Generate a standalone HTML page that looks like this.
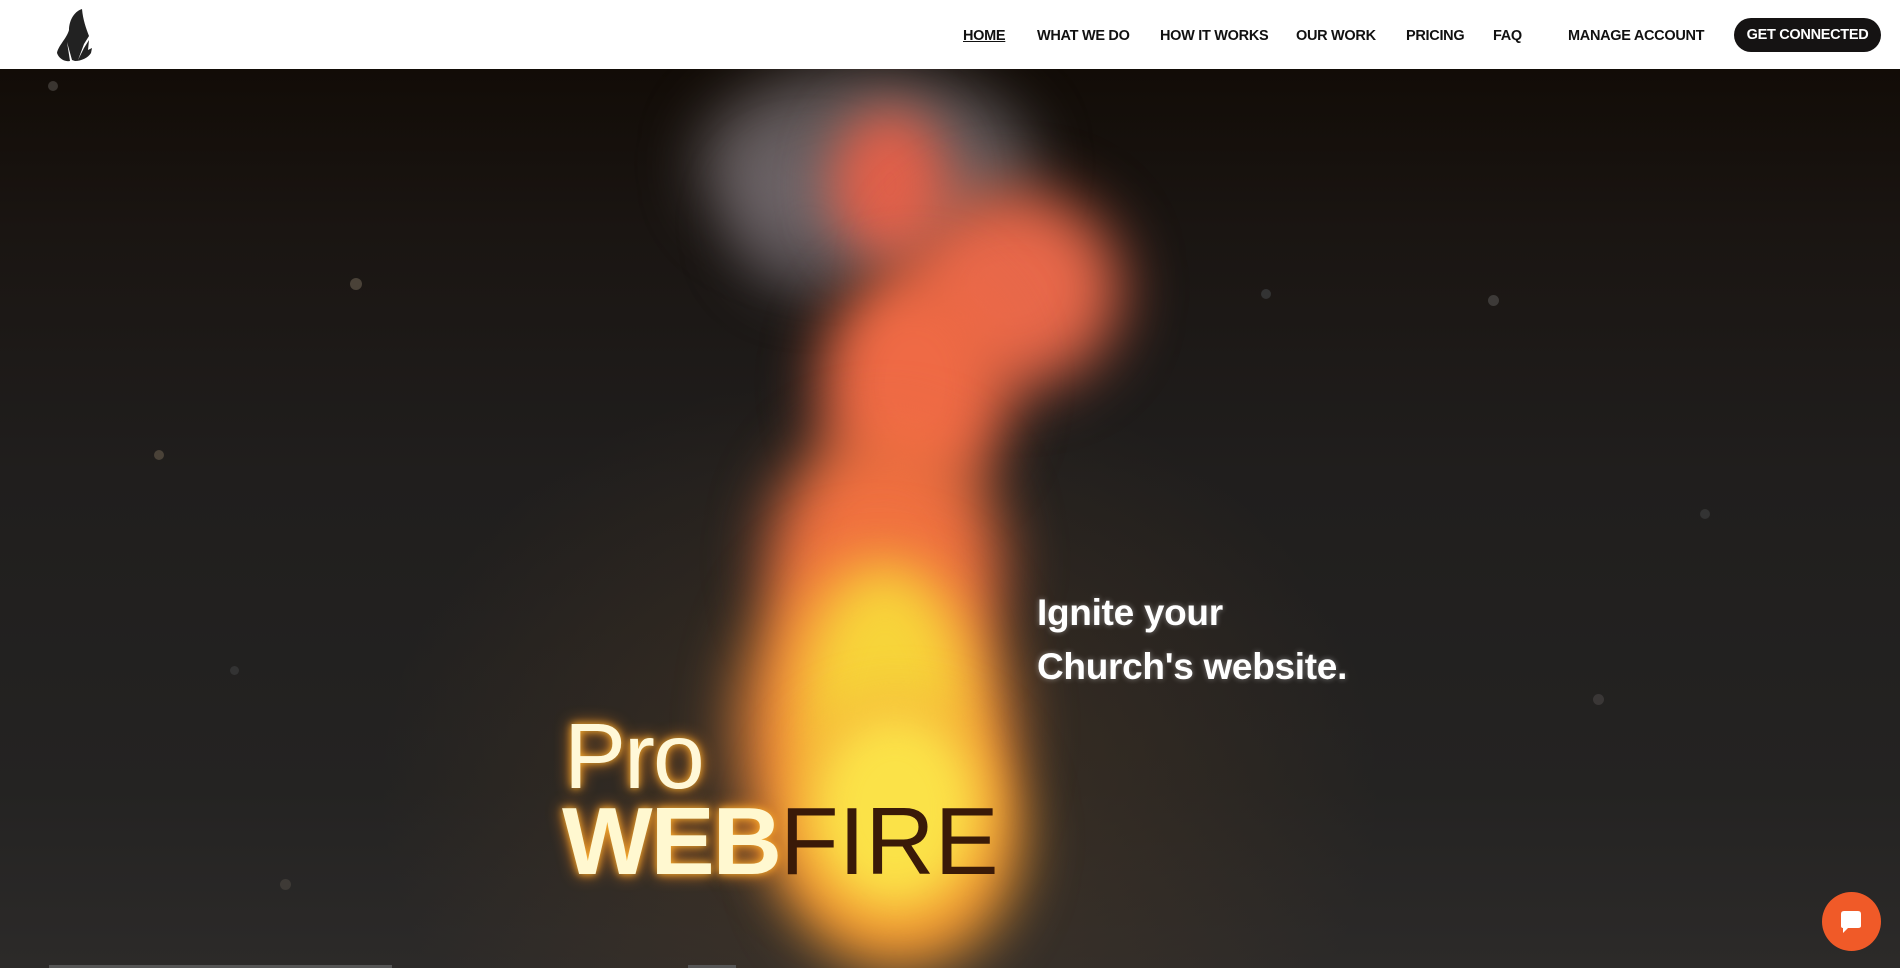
<!DOCTYPE html>
<html><head><meta charset="utf-8"><style>
*{margin:0;padding:0;box-sizing:border-box}
body{width:1900px;height:968px;overflow:hidden;background:#1e1d1d;font-family:"Liberation Sans",sans-serif}
header{position:absolute;left:0;top:0;width:1900px;height:69px;background:#fff;z-index:5}
nav a{position:absolute;top:28px;font-size:14.5px;font-weight:bold;color:#111;text-decoration:none;letter-spacing:-0.3px}
.btn{position:absolute;left:1734px;top:18px;width:147px;height:34px;border-radius:17px;background:#151313;color:#fff;font-size:14.5px;font-weight:bold;text-align:center;line-height:35px;letter-spacing:-0.3px}
.hero{position:absolute;left:0;top:69px;width:1900px;height:899px;background:linear-gradient(180deg,#120c07 0%,#1a1512 18%,#201e1d 45%,#242322 80%,#2c2a29 100%);overflow:hidden}
.b{position:absolute;border-radius:50%}
.t{position:absolute;white-space:nowrap}
</style></head><body>
<header>
<svg style="position:absolute;left:55px;top:8px" width="46" height="55" viewBox="0 0 46 55">
<path d="M27 1 C18 4 14 14 14 22 C12 30 3 38 2 45 C4 51 10 54 15 53 L12 34 L17 52 L20 53 C26 53 33 50 36 45 L37 40 L33 42 L34 32 L29 40 L23 52 L29 36 L34 28 C31 20 28 12 27 1 Z" fill="#222"/>
</svg>
<nav>
<a style="left:963px;text-decoration:underline">HOME</a>
<a style="left:1037px">WHAT WE DO</a>
<a style="left:1160px">HOW IT WORKS</a>
<a style="left:1296px">OUR WORK</a>
<a style="left:1406px">PRICING</a>
<a style="left:1493px">FAQ</a>
<a style="left:1568px">MANAGE ACCOUNT</a>
</nav>
<div class="btn">GET CONNECTED</div>
</header>
<div class="hero">
<div style="position:absolute;left:0;top:0;width:1900px;height:899px;background:radial-gradient(ellipse 500px 420px at 880px 720px,rgba(120,80,40,.3),transparent)"></div>
<div class="b" style="left:700px;top:0;width:330px;height:190px;background:rgba(150,140,145,.6);filter:blur(30px)"></div>
<div class="b" style="left:730px;top:80px;width:160px;height:150px;background:rgba(120,110,115,.5);filter:blur(25px)"></div>
<div class="b" style="left:830px;top:40px;width:120px;height:150px;background:#e0604a;filter:blur(25px)"></div>
<div class="b" style="left:900px;top:120px;width:220px;height:200px;background:#e8684a;filter:blur(30px)"></div>
<div class="b" style="left:820px;top:200px;width:190px;height:230px;background:#ef6a45;filter:blur(28px)"></div>
<div class="b" style="left:770px;top:360px;width:230px;height:260px;background:#f07040;filter:blur(30px)"></div>
<div class="b" style="left:740px;top:480px;width:270px;height:360px;background:#f58a3a;filter:blur(30px)"></div>
<div class="b" style="left:800px;top:500px;width:170px;height:300px;background:#f7d43a;filter:blur(25px)"></div>
<div class="b" style="left:780px;top:640px;width:240px;height:260px;background:#f39a33;filter:blur(28px)"></div>
<div class="b" style="left:810px;top:640px;width:170px;height:200px;background:#fbe248;filter:blur(22px)"></div>
<div class="b" style="left:48px;top:12px;width:10px;height:10px;background:#3a3530"></div>
<div class="b" style="left:350px;top:209px;width:12px;height:12px;background:#4a4238"></div>
<div class="b" style="left:154px;top:381px;width:10px;height:10px;background:#4a4238"></div>
<div class="b" style="left:1488px;top:226px;width:11px;height:11px;background:#3d3a38"></div>
<div class="b" style="left:1261px;top:220px;width:10px;height:10px;background:#333"></div>
<div class="b" style="left:1700px;top:440px;width:10px;height:10px;background:#333"></div>
<div class="b" style="left:1593px;top:625px;width:11px;height:11px;background:#3a3736"></div>
<div class="b" style="left:280px;top:810px;width:11px;height:11px;background:#3e3a36"></div>
<div class="b" style="left:230px;top:597px;width:9px;height:9px;background:#333"></div>
<div class="t" style="left:1037px;top:517px;font-size:37px;font-weight:bold;color:#fff;line-height:54px;letter-spacing:-0.3px;text-shadow:0 0 6px rgba(255,255,255,.4)">Ignite your<br>Church's website.</div>
<div class="t" style="left:564px;top:634px;font-size:93px;color:#fff8d8;letter-spacing:-2px;text-shadow:0 0 8px #f8b030,0 0 16px #e88020">Pro</div>
<div class="t" style="left:562px;top:718px;font-size:96px;font-weight:bold;color:#fff8d0;letter-spacing:-2px;text-shadow:0 0 8px #f8b030,0 0 16px #e88020">WEB<span style="font-weight:normal;color:#3a1a08;text-shadow:none;letter-spacing:0px">FIRE</span></div>
<div style="position:absolute;left:49px;top:896px;width:343px;height:3px;background:#555"></div>
<div style="position:absolute;left:688px;top:896px;width:48px;height:3px;background:#555"></div>
</div>
<div style="position:absolute;left:1822px;top:892px;width:59px;height:59px;border-radius:50%;background:#f05a28"></div>
<svg style="position:absolute;left:1836px;top:906px" width="30" height="30" viewBox="0 0 30 30"><path d="M6 5 H22 Q25 5 25 8 V20 Q25 22 22 22 H12 L7 27 V22 Q5 22 5 20 V8 Q5 5 8 5 Z" fill="#fff"/></svg>
</body></html>
